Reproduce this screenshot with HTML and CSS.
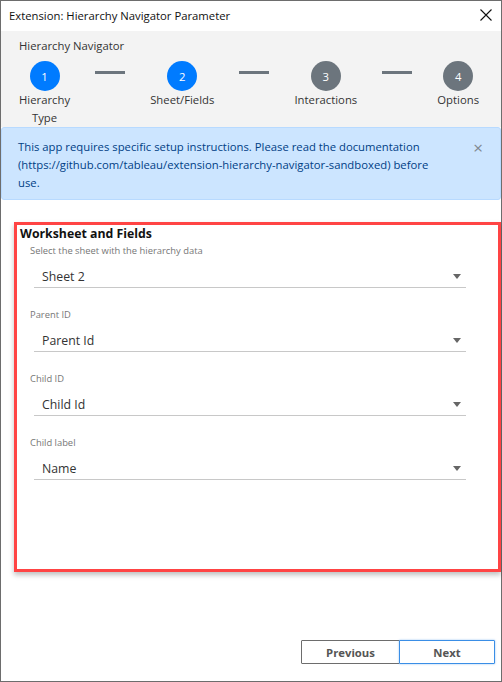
FILE: index.html
```html
<!DOCTYPE html>
<html>
<head>
<meta charset="utf-8">
<link rel="stylesheet" href="styles.css">
</head>
<body>
<div class="window">
  <div class="titlebar">
    <span class="title">Extension: Hierarchy Navigator Parameter</span>
    <svg class="close" width="12" height="12" viewBox="0 0 12 12"><path d="M0.5 0.5 L11.5 11.5 M11.5 0.5 L0.5 11.5" stroke="#111" stroke-width="1.1" fill="none"/></svg>
  </div>
  <div class="header">
    <div class="app-name">Hierarchy Navigator</div>
    <div class="stepper">
      <div class="step"><div class="circle active">1</div><div class="step-label">Hierarchy Type</div></div>
      <div class="connector"><span></span></div>
      <div class="step"><div class="circle active">2</div><div class="step-label">Sheet/Fields</div></div>
      <div class="connector"><span></span></div>
      <div class="step"><div class="circle">3</div><div class="step-label">Interactions</div></div>
      <div class="connector"><span></span></div>
      <div class="step"><div class="circle">4</div><div class="step-label">Options</div></div>
    </div>
  </div>
  <div class="alert">
    <div class="alert-text">This app requires specific setup instructions. Please read the documentation (https://github.com/tableau/extension-hierarchy-navigator-sandboxed) before use.</div>
    <span class="alert-close">×</span>
  </div>
  <div class="content">
    <div class="card">
      <div class="card-title">Worksheet and Fields</div>
      <div class="field">
        <div class="field-label">Select the sheet with the hierarchy data</div>
        <div class="select"><span>Sheet 2</span><i class="arrow"></i></div>
      </div>
      <div class="field">
        <div class="field-label">Parent ID</div>
        <div class="select"><span>Parent Id</span><i class="arrow"></i></div>
      </div>
      <div class="field">
        <div class="field-label">Child ID</div>
        <div class="select"><span>Child Id</span><i class="arrow"></i></div>
      </div>
      <div class="field">
        <div class="field-label">Child label</div>
        <div class="select"><span>Name</span><i class="arrow"></i></div>
      </div>
    </div>
    <div class="footer">
      <button class="btn">Previous</button>
      <button class="btn primary">Next</button>
    </div>
  </div>
</div>
</body>
</html>
```
FILE: styles.css
```css
* { box-sizing: border-box; }
html, body { margin: 0; padding: 0; background: #fff; }
body { font-family: "Open Sans", "Noto Sans", sans-serif; color: #333; }
.window {
  width: 502px;
  height: 682px;
  border: 1px solid #6d6d6d;
  display: flex;
  flex-direction: column;
  background: #fff;
}
.titlebar {
  height: 30px;
  flex: none;
  display: flex;
  align-items: center;
  justify-content: space-between;
  padding: 0 9px 1px 8px;
  background: #fff;
}
.title { font-size: 11.3px; color: #111; }
.close { display: block; margin-top: -1px; }
.header {
  background: #f3f3f3;
  padding: 6px 22px 0 18px;
  flex: none;
}
.app-name { font-size: 11.3px; line-height: 18px; color: #333; }
.stepper {
  display: flex;
  align-items: flex-start;
  margin-top: 6px;
}
.step {
  width: min-content;
  display: flex;
  flex-direction: column;
  align-items: center;
}
.circle {
  width: 30px;
  height: 30px;
  border-radius: 50%;
  background: #6c757d;
  color: #fff;
  font-size: 11.3px;
  display: flex;
  align-items: center;
  justify-content: center;
}
.circle.active { background: #007bff; }
.step-label { font-size: 11.3px; line-height: 18px; text-align: center; color: #333; }
.connector {
  flex: 1;
  display: flex;
  justify-content: center;
  padding-top: 10px;
}
.connector span { display: block; width: 30px; height: 3px; background: #6c757d; }
.alert {
  flex: none;
  background: #cce5ff;
  border: 1px solid #b8daff;
  border-radius: 3px;
  padding: 10px 17px 7px 16px;
  display: flex;
  justify-content: space-between;
  align-items: flex-start;
  color: #004085;
}
.alert-text { font-size: 11.3px; line-height: 18px; width: 425px; }
.alert-close { font-size: 17px; line-height: 18px; color: #808890; margin-top: 1px; }
.content {
  flex: 1;
  display: flex;
  flex-direction: column;
  padding: 22px 0 0 13px;
}
.card {
  height: 350px;
  border: 3px solid #ff4444;
  box-shadow: 0 3px 5px rgba(0,0,0,0.25);
  padding: 0 0 0 3px;
}
.card-title { font-size: 12.3px; font-weight: bold; color: #111; line-height: 18px; }
.field { padding-left: 10px; width: 446px; }
.field-label { font-size: 9.4px; color: #777; line-height: 14px; margin-top: 1px; }
.field + .field .field-label { margin-top: 20px; }
.select {
  margin-left: 4px;
  margin-top: 8px;
  height: 22px;
  border-bottom: 1px solid #c8c8c8;
  display: flex;
  align-items: center;
  justify-content: space-between;
  padding: 0 5px 0 8px;
  font-size: 12.3px;
  color: #333;
}
.arrow {
  width: 0; height: 0;
  border-left: 4px solid transparent;
  border-right: 4px solid transparent;
  border-top: 5px solid #666;
}
.footer {
  margin-top: auto;
  display: flex;
  justify-content: flex-end;
  padding: 0 6px 17px 0;
}
.btn {
  width: 99px;
  height: 24px;
  font-family: "Open Sans", "Noto Sans", sans-serif;
  font-size: 11.3px;
  font-weight: bold;
  color: #555;
  background: #fff;
  border: 1px solid #6d6d6d;
  border-radius: 1px;
  padding: 0;
}
.btn.primary {
  width: 96px;
  margin-left: -1px;
  border-color: #3a8ee6;
  box-shadow: 0 0 2px rgba(58,142,230,0.6);
}
```
